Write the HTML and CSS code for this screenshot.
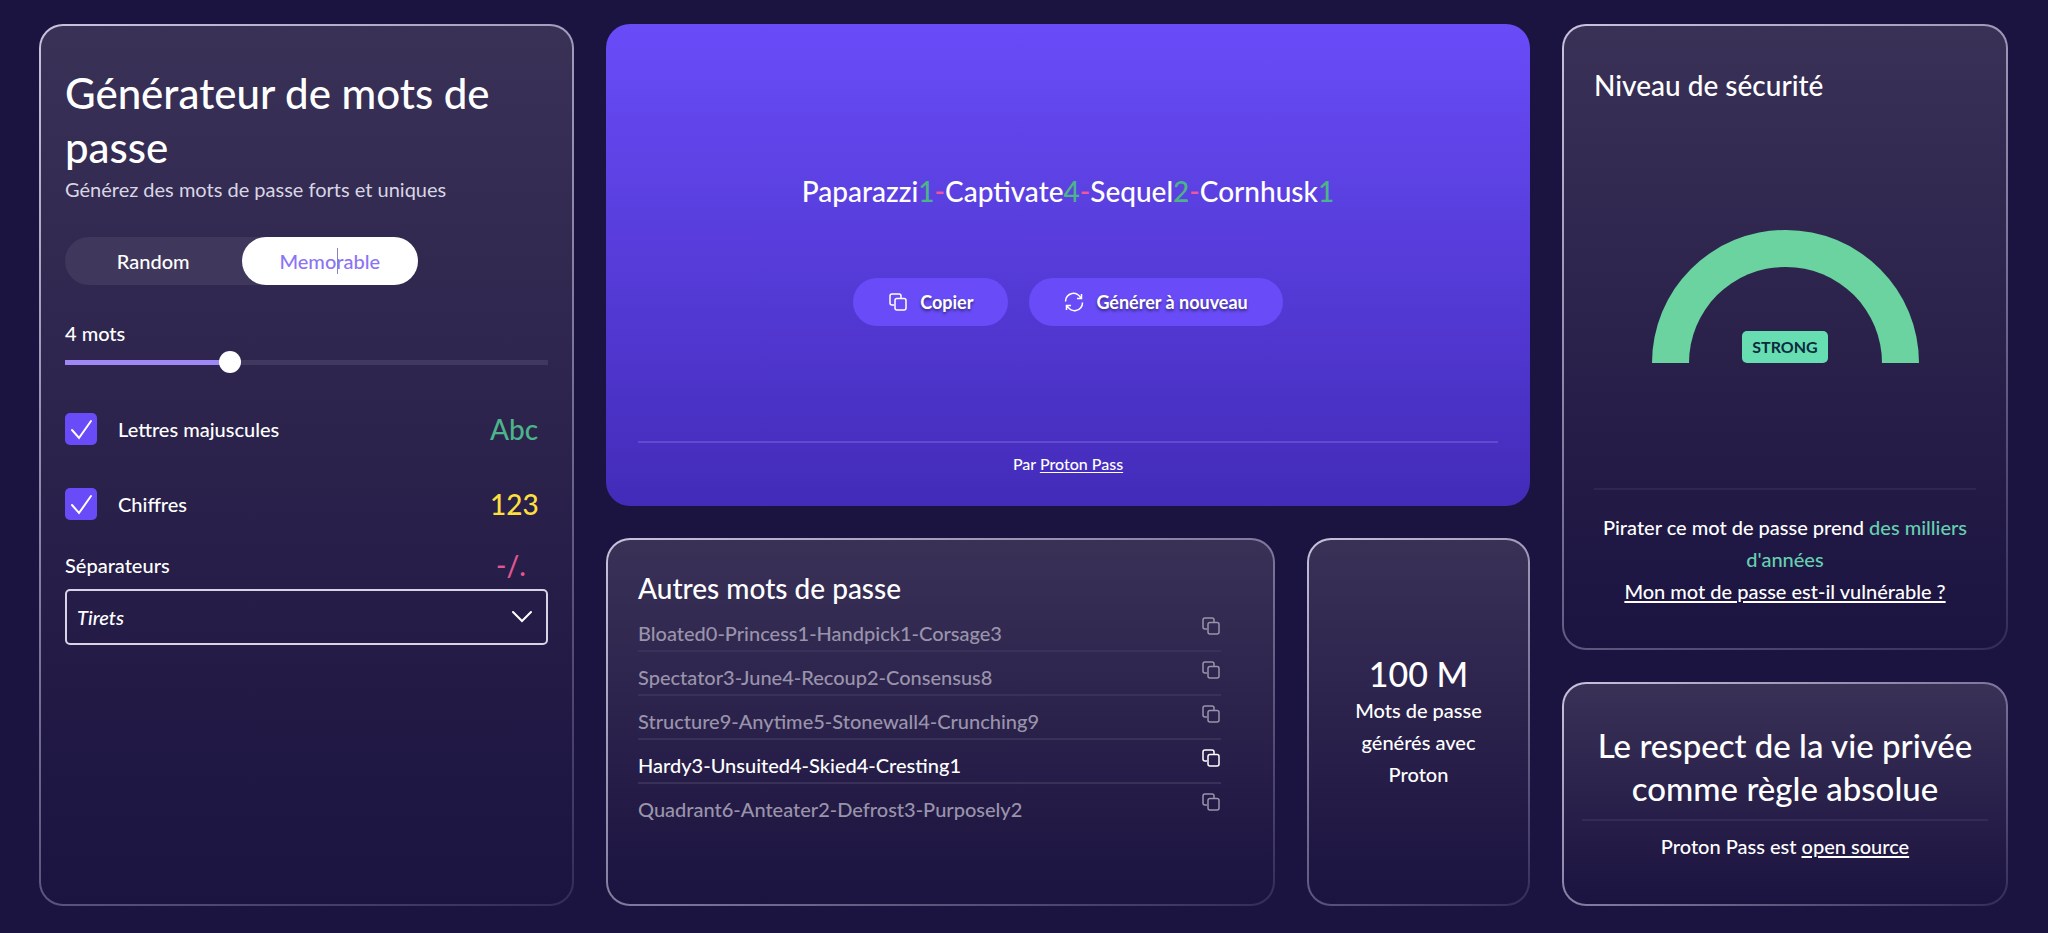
FILE: index.html
```html
<!DOCTYPE html>
<html lang="fr">

<head>
    <meta charset="UTF-8">
    <meta name="viewport" content="width=device-width, initial-scale=1.0">
    <title>Générateur de mots de passe</title>
    <link rel="stylesheet" href="styles.css">
</head>

<body>

    <svg class="sprite" aria-hidden="true">
        <symbol id="copy" viewBox="0 0 20 20">
            <path d="M13 6V4a2 2 0 0 0-2-2H4a2 2 0 0 0-2 2v7a2 2 0 0 0 2 2h2" />
            <rect x="7" y="6.500" width="11" height="11.500" rx="2" />
        </symbol>
        <symbol id="refresh" viewBox="0 0 20 20">
            <path d="M1.500 9.500a8 8 0 0 1 15.500-3M17.500 2v4.500H13M18.500 10.500a8 8 0 0 1-15.500 3M2.500 18v-4.500H7" />
        </symbol>
    </svg>

    <main class="grid">

        <section class="card settings">
            <h1 class="title">Générateur de mots de passe</h1>
            <p class="subtitle">Générez des mots de passe forts et uniques</p>

            <div class="tabs">
                <button class="tab">Random</button>
                <button class="tab active">Memorable</button>
            </div>

            <label class="label" for="words">4 mots</label>
            <input class="slider" type="range" id="words" min="1" max="10" value="4">

            <div class="option">
                <input class="check" type="checkbox" id="caps" checked>
                <label for="caps">Lettres majuscules</label>
                <span class="sample green">Abc</span>
            </div>
            <div class="option">
                <input class="check" type="checkbox" id="nums" checked>
                <label for="nums">Chiffres</label>
                <span class="sample yellow">123</span>
            </div>
            <div class="option sep">
                <label for="separator">Séparateurs</label>
                <span class="sample pink">-/.</span>
            </div>
            <select class="select" id="separator">
                <option>Tirets</option>
            </select>
        </section>

        <div class="middle">
            <section class="password">
                <div class="password-body">
                    <p class="word">Paparazzi<span class="num">1</span><span class="dash">-</span>Captivate<span class="num">4</span><span class="dash">-</span>Sequel<span class="num">2</span><span class="dash">-</span>Cornhusk<span class="num">1</span></p>
                    <div class="buttons">
                        <button class="btn"><svg class="icon"><use href="#copy" /></svg>Copier</button>
                        <button class="btn"><svg class="icon"><use href="#refresh" /></svg>Générer à nouveau</button>
                    </div>
                </div>
                <p class="by">Par <a href="#">Proton Pass</a></p>
            </section>

            <section class="card others">
                <h2 class="heading">Autres mots de passe</h2>
                <ul class="list">
                    <li class="row">Bloated0-Princess1-Handpick1-Corsage3<button class="copy" aria-label="Copier"><svg class="icon"><use href="#copy" /></svg></button></li>
                    <li class="row">Spectator3-June4-Recoup2-Consensus8<button class="copy" aria-label="Copier"><svg class="icon"><use href="#copy" /></svg></button></li>
                    <li class="row">Structure9-Anytime5-Stonewall4-Crunching9<button class="copy" aria-label="Copier"><svg class="icon"><use href="#copy" /></svg></button></li>
                    <li class="row current">Hardy3-Unsuited4-Skied4-Cresting1<button class="copy" aria-label="Copier"><svg class="icon"><use href="#copy" /></svg></button></li>
                    <li class="row">Quadrant6-Anteater2-Defrost3-Purposely2<button class="copy" aria-label="Copier"><svg class="icon"><use href="#copy" /></svg></button></li>
                </ul>
            </section>

            <section class="card count">
                <b class="million">100 M</b>
                <p>Mots de passe générés avec Proton</p>
            </section>
        </div>

        <div class="right">
            <section class="card security">
                <h2 class="heading">Niveau de sécurité</h2>
                <div class="gauge">
                    <span class="badge">STRONG</span>
                </div>
                <div class="crack">
                    <p>Pirater ce mot de passe prend <span class="time">des milliers d'années</span></p>
                    <a href="#">Mon mot de passe est-il vulnérable ?</a>
                </div>
            </section>

            <section class="card privacy">
                <h2 class="privacy-title">Le respect de la vie privée comme règle absolue</h2>
                <p class="source">Proton Pass est <a href="#">open source</a></p>
            </section>
        </div>

    </main>

</body>

</html>
```

FILE: styles.css
```css
* {
    box-sizing: border-box;
}

body {
    margin: 0;
    min-height: 100vh;
    background-color: #1b1340;
    color: white;
    font-family: Lato, "Open Sans", sans-serif;
    font-size: 20px;
    font-weight: 500;
    line-height: 32px;
}

h1,
h2,
p,
ul {
    margin: 0;
    padding: 0;
    font-weight: 500;
}

a {
    color: white;
    text-underline-offset: 2px;
}

button,
select {
    font: inherit;
    color: inherit;
    cursor: pointer;
}

.sprite {
    display: none;
}

.icon {
    width: 20px;
    height: 20px;
    fill: none;
    stroke: currentColor;
    stroke-width: 1.5;
}

.grid {
    min-height: 100vh;
    padding: 24px 40px 27px 39px;
    display: grid;
    grid-template-columns: 535fr 924fr 446fr;
    gap: 32px;
}

.card {
    border: 2px solid transparent;
    border-radius: 24px;
    background: linear-gradient(#393156, #1b1340) padding-box,
        linear-gradient(150deg, #c9c4dc, #817a9e 50%, #342b5a) border-box;
}

/* left column */

.settings {
    padding: 40px 24px;
}

.title {
    font-size: 42px;
    line-height: 54px;
}

.subtitle {
    line-height: 30px;
    font-weight: 400;
    color: #d9d6e4;
}

.tabs {
    width: 353px;
    height: 48px;
    margin: 33px 0 32px;
    border-radius: 24px;
    background-color: #40385c;
    display: flex;
}

.tab {
    flex: 1;
    border: none;
    border-radius: 24px;
    background: none;
}

.tab.active {
    position: relative;
    background-color: white;
    color: #8b74f5;
}

/* text cursor over the tab */
.tab.active::after {
    content: "";
    position: absolute;
    top: 11px;
    left: 54%;
    width: 1px;
    height: 26px;
    background-color: #8d83c4;
}

.label {
    display: block;
}

.slider {
    appearance: none;
    display: block;
    width: 100%;
    height: 22px;
    margin: 2px 0 40px;
    background: linear-gradient(90deg, #9d88f5 34%, #40385f 34%) center / 100% 5px no-repeat;
}

.slider::-webkit-slider-thumb {
    appearance: none;
    width: 22px;
    height: 22px;
    border-radius: 50%;
    background-color: white;
}

.option {
    height: 32px;
    margin-bottom: 43px;
    display: flex;
    align-items: center;
}

.check {
    appearance: none;
    width: 32px;
    height: 32px;
    margin: 0 21px 0 0;
    border-radius: 5px;
    background: #694cf8 url("data:image/svg+xml,%3Csvg xmlns='http://www.w3.org/2000/svg' viewBox='0 0 32 32' fill='none' stroke='white' stroke-width='2' stroke-linecap='round'%3E%3Cpath d='M7 17l7 8L26 8'/%3E%3C/svg%3E");
}

.sample {
    width: 58px;
    margin-left: auto;
    font-size: 28px;
}

.green {
    color: #4cb38a;
}

.yellow {
    color: #ffdf3f;
}

.pink {
    color: #e2578f;
    padding-left: 6px;
}

.sep {
    margin: -14px 0 8px;
}

.select {
    appearance: none;
    width: 100%;
    height: 56px;
    padding: 0 10px;
    border: 2px solid #d8d4e8;
    border-radius: 5px;
    font-style: italic;
    background: url("data:image/svg+xml,%3Csvg xmlns='http://www.w3.org/2000/svg' viewBox='0 0 20 20' fill='none' stroke='white' stroke-width='2' stroke-linecap='round'%3E%3Cpath d='M1 5l9 9 9-9'/%3E%3C/svg%3E") right 14px center / 20px no-repeat;
}

/* middle column */

.middle {
    display: grid;
    grid-template-columns: 3fr 1fr;
    grid-template-rows: 482fr 368fr;
    gap: 32px;
}

.password {
    grid-column: span 2;
    padding: 0 32px 26px;
    border-radius: 24px;
    background: linear-gradient(#694cf8, #432bb9);
    text-align: center;
    display: flex;
    flex-direction: column;
}

.password-body {
    flex: 1;
    display: flex;
    flex-direction: column;
    justify-content: center;
    align-items: center;
    gap: 67px;
    padding-top: 32px;
}

.word {
    font-size: 28px;
    line-height: 40px;
}

.num {
    color: #4cb38a;
}

.dash {
    color: #f0569a;
}

.buttons {
    display: flex;
    gap: 21px;
}

.btn {
    height: 48px;
    padding: 0 35px;
    border: none;
    border-radius: 24px;
    background-color: #694cf8;
    font-size: 18px;
    font-weight: 700;
    text-shadow: 0 2px 3px rgba(0, 0, 0, 0.5);
    display: flex;
    align-items: center;
    gap: 12px;
}

.by {
    padding-top: 5px;
    border-top: 2px solid #6349d0;
    font-size: 16px;
}

.others {
    padding: 28px 52px 28px 30px;
}

.heading {
    font-size: 28px;
    line-height: 40px;
}

.row {
    height: 44px;
    padding-top: 7px;
    border-bottom: 2px solid #3a3159;
    display: flex;
    justify-content: space-between;
    align-items: center;
    list-style: none;
    color: #9a94ab;
}

.row:last-child {
    border-color: transparent;
}

.row.current {
    color: white;
}

.copy {
    height: 20px;
    margin-bottom: 14px;
    padding: 0;
    border: none;
    background: none;
    line-height: 0;
}

.count {
    padding: 0 32px;
    text-align: center;
    display: flex;
    flex-direction: column;
    justify-content: center;
}

.million {
    font-size: 34px;
    line-height: 40px;
    font-weight: 500;
}

/* right column */

.right {
    display: grid;
    grid-template-rows: 626fr 224fr;
    gap: 32px;
}

.security {
    padding: 39px 30px 41px;
    display: flex;
    flex-direction: column;
    justify-content: space-between;
}

.gauge {
    width: 267px;
    height: 133px;
    margin: 0 auto;
    border: 37px solid #6bd39f;
    border-bottom: none;
    border-radius: 134px 134px 0 0;
    display: flex;
    justify-content: center;
    align-items: flex-end;
}

.badge {
    padding: 0 10px;
    border-radius: 5px;
    background-color: #66deb2;
    color: #0c2a3e;
    font-size: 16px;
    font-weight: 700;
}

.crack {
    padding-top: 21px;
    border-top: 2px solid #2f2652;
    text-align: center;
}

.time {
    color: #66cfb0;
}

.privacy {
    padding: 40px 18px 20px;
    text-align: center;
}

.privacy-title {
    font-size: 33px;
    line-height: 43px;
}

.source {
    margin-top: 9px;
    padding-top: 9px;
    border-top: 2px solid #342b57;
}
```
